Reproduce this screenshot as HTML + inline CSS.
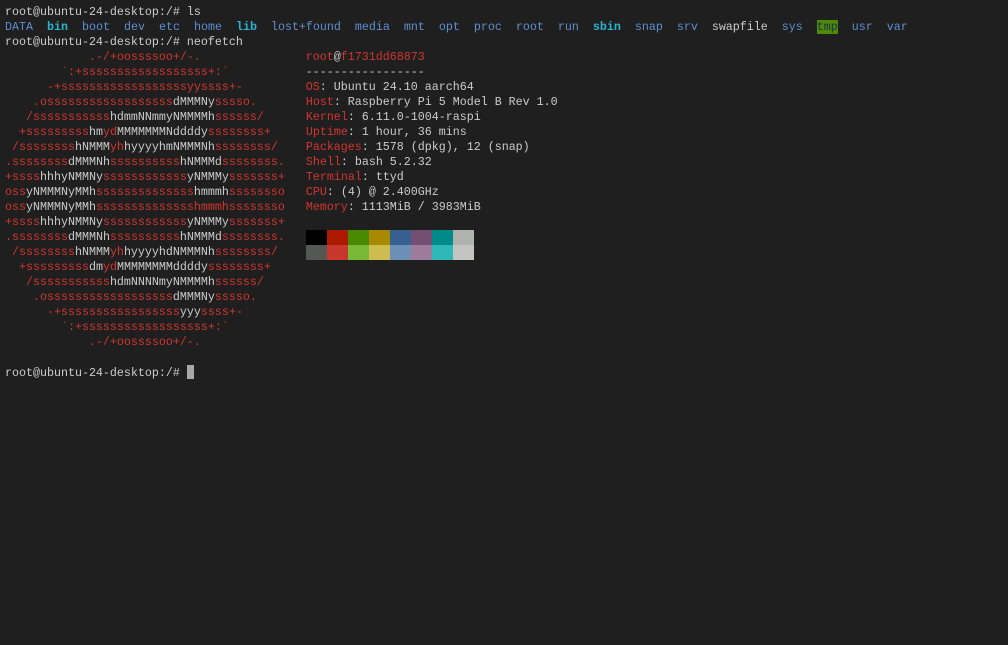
<!DOCTYPE html>
<html><head><meta charset="utf-8"><style>
html,body{margin:0;padding:0;background:#1f1f1f;width:1008px;height:645px;overflow:hidden}
pre{margin:0;padding:5px 0 0 5px;font-family:"Liberation Mono",monospace;font-size:11.667px;line-height:15px;color:#cccccc;white-space:pre;position:relative}
.r{color:#d1362f}.w{color:#c8c8c8}.b{color:#5d8fd0}.c{color:#2bb4d0;font-weight:bold}
.t{background:#4e8a06;color:#1a3050}
.cur{display:inline-block;width:7px;height:14px;background:#a8a8a8;vertical-align:-3px}
.pal{position:absolute;left:306px;top:230px;display:grid;grid-template-columns:repeat(8,21px);grid-auto-rows:15px}
</style></head><body><pre>root@ubuntu-24-desktop:/# ls
<span class="b">DATA</span>  <span class="c">bin</span>  <span class="b">boot</span>  <span class="b">dev</span>  <span class="b">etc</span>  <span class="b">home</span>  <span class="c">lib</span>  <span class="b">lost+found</span>  <span class="b">media</span>  <span class="b">mnt</span>  <span class="b">opt</span>  <span class="b">proc</span>  <span class="b">root</span>  <span class="b">run</span>  <span class="c">sbin</span>  <span class="b">snap</span>  <span class="b">srv</span>  swapfile  <span class="b">sys</span>  <span class="t">tmp</span>  <span class="b">usr</span>  <span class="b">var</span>
root@ubuntu-24-desktop:/# neofetch
<span class="r">            .-/+oossssoo+/-.</span>               <span class="r">root</span>@<span class="r">f1731dd68873</span>
<span class="r">        `:+ssssssssssssssssss+:`</span>           -----------------
<span class="r">      -+ssssssssssssssssssyyssss+-</span>         <span class="r">OS</span>: Ubuntu 24.10 aarch64
<span class="r">    .ossssssssssssssssss</span>dMMMNy<span class="r">sssso.</span>       <span class="r">Host</span>: Raspberry Pi 5 Model B Rev 1.0
<span class="r">   /sssssssssss</span>hdmmNNmmyNMMMMh<span class="r">ssssss/</span>      <span class="r">Kernel</span>: 6.11.0-1004-raspi
<span class="r">  +sssssssss</span>hm<span class="r">yd</span>MMMMMMMNddddy<span class="r">ssssssss+</span>     <span class="r">Uptime</span>: 1 hour, 36 mins
<span class="r"> /ssssssss</span>hNMMM<span class="r">yh</span>hyyyyhmNMMMNh<span class="r">ssssssss/</span>    <span class="r">Packages</span>: 1578 (dpkg), 12 (snap)
<span class="r">.ssssssss</span>dMMMNh<span class="r">ssssssssss</span>hNMMMd<span class="r">ssssssss.</span>   <span class="r">Shell</span>: bash 5.2.32
<span class="r">+ssss</span>hhhyNMMNy<span class="r">ssssssssssss</span>yNMMMy<span class="r">sssssss+</span>   <span class="r">Terminal</span>: ttyd
<span class="r">oss</span>yNMMMNyMMh<span class="r">ssssssssssssss</span>hmmmh<span class="r">ssssssso</span>   <span class="r">CPU</span>: (4) @ 2.400GHz
<span class="r">oss</span>yNMMMNyMMh<span class="r">sssssssssssssshmmmhssssssso</span>   <span class="r">Memory</span>: 1113MiB / 3983MiB
<span class="r">+ssss</span>hhhyNMMNy<span class="r">ssssssssssss</span>yNMMMy<span class="r">sssssss+</span>
<span class="r">.ssssssss</span>dMMMNh<span class="r">ssssssssss</span>hNMMMd<span class="r">ssssssss.</span>
<span class="r"> /ssssssss</span>hNMMM<span class="r">yh</span>hyyyyhdNMMMNh<span class="r">ssssssss/</span>
<span class="r">  +sssssssss</span>dm<span class="r">yd</span>MMMMMMMMddddy<span class="r">ssssssss+</span>
<span class="r">   /sssssssssss</span>hdmNNNNmyNMMMMh<span class="r">ssssss/</span>
<span class="r">    .ossssssssssssssssss</span>dMMMNy<span class="r">sssso.</span>
<span class="r">      -+sssssssssssssssss</span>yyy<span class="r">ssss+-</span>
<span class="r">        `:+ssssssssssssssssss+:`</span>
<span class="r">            .-/+oossssoo+/-.</span>

root@ubuntu-24-desktop:/# <span class="cur"></span></pre>
<div class="pal">
<div style="background:#000"></div><div style="background:#ad1a00"></div><div style="background:#4a8a00"></div><div style="background:#a88a00"></div><div style="background:#356090"></div><div style="background:#744f74"></div><div style="background:#008a8a"></div><div style="background:#b0b2ae"></div>
<div style="background:#555753"></div><div style="background:#c8372c"></div><div style="background:#7ab838"></div><div style="background:#cdbd50"></div><div style="background:#6b8fb5"></div><div style="background:#9c7b9c"></div><div style="background:#2eb8b8"></div><div style="background:#c4c4c2"></div>
</div>
</body></html>
